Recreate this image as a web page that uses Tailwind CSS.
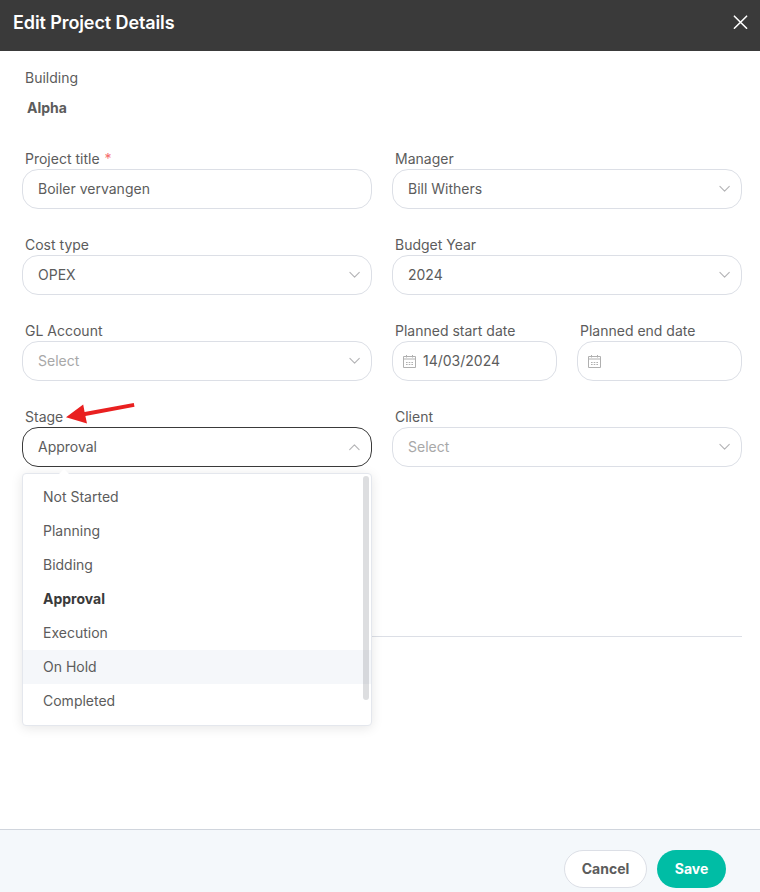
<!DOCTYPE html>
<html lang="en">
<head>
<meta charset="utf-8">
<title>Edit Project Details</title>
<script src="https://cdn.jsdelivr.net/npm/@tailwindcss/browser@4"></script>
</head>
<body class="bg-white">
<svg class="hidden">
  <symbol id="chevron" viewBox="0 0 12 8"><path d="M.9 1.4 5.6 6.2 10.3 1.4" fill="none" stroke="#b4b4b6" stroke-width="1.1" stroke-linecap="round" stroke-linejoin="round"/></symbol>
  <symbol id="calendar" viewBox="0 0 13 13"><path d="M.5 1.5h12v11H.5zM.5 4h12M3.5 0v2.5M9.5 0v2.5M3 7.5h1.6M5.7 7.5h1.6M8.4 7.5H10M3 9.5h1.6M5.7 9.5h1.6M8.4 9.5H10" fill="none" stroke="#b0b0b0" stroke-width="1"/></symbol>
</svg>
<div class="flex h-[892px] w-[760px] flex-col overflow-hidden font-['Inter',sans-serif] text-sm leading-5 text-[#5c5c5c]">
  <header class="flex h-[51px] shrink-0 items-start justify-between bg-[#3a3a3a] pl-[13px] pr-3 pt-[11px]">
    <h1 class="text-lg leading-6 font-semibold tracking-[-0.1px] text-white">Edit Project Details</h1>
    <svg class="mt-[3px] h-4 w-4" viewBox="0 0 16 16"><path d="M2.4 2.2 14.6 14.2M14.6 2.2 2.4 14.2" stroke="#fff" stroke-width="1.6" stroke-linecap="round"/></svg>
  </header>
  <main class="flex flex-1 flex-col pl-[22px] pr-[18px] pt-[17px]">
    <div class="pl-[3px]">Building</div>
    <div class="mt-[10px] pl-[5px] font-bold">Alpha</div>
    <div class="mt-[31px] grid grid-cols-2 gap-x-5 gap-y-[26px]">
      <div>
        <div class="pl-[3px]">Project title <span class="ml-[1px] text-[#f56c6c]">*</span></div>
        <div class="flex h-10 items-center rounded-[16px] border border-[#dcdfe6] pl-[15px]">Boiler vervangen</div>
      </div>
      <div>
        <div class="pl-[3px]">Manager</div>
        <div class="flex h-10 items-center justify-between rounded-[16px] border border-[#dcdfe6] pl-[15px] pr-[10px]">Bill Withers<svg class="h-2 w-3"><use href="#chevron"/></svg></div>
      </div>
      <div>
        <div class="pl-[3px]">Cost type</div>
        <div class="flex h-10 items-center justify-between rounded-[16px] border border-[#dcdfe6] pl-[15px] pr-[10px]">OPEX<svg class="h-2 w-3"><use href="#chevron"/></svg></div>
      </div>
      <div>
        <div class="pl-[3px]">Budget Year</div>
        <div class="flex h-10 items-center justify-between rounded-[16px] border border-[#dcdfe6] pl-[15px] pr-[10px]">2024<svg class="h-2 w-3"><use href="#chevron"/></svg></div>
      </div>
      <div>
        <div class="pl-[3px]">GL Account</div>
        <div class="flex h-10 items-center justify-between rounded-[16px] border border-[#dcdfe6] pl-[15px] pr-[10px] text-[#a8a8a8]">Select<svg class="h-2 w-3"><use href="#chevron"/></svg></div>
      </div>
      <div class="grid grid-cols-2 gap-x-5">
        <div>
          <div class="pl-[3px]">Planned start date</div>
          <div class="flex h-10 items-center gap-[7px] rounded-[16px] border border-[#dcdfe6] pl-[10px]"><svg class="h-[13px] w-[13px]"><use href="#calendar"/></svg>14/03/2024</div>
        </div>
        <div>
          <div class="pl-[3px]">Planned end date</div>
          <div class="flex h-10 items-center rounded-[16px] border border-[#dcdfe6] pl-[10px]"><svg class="h-[13px] w-[13px]"><use href="#calendar"/></svg></div>
        </div>
      </div>
      <div class="relative">
        <div class="pl-[3px]">Stage</div>
        <svg class="absolute left-[43px] -top-1 h-[22px] w-[70px]" viewBox="0 0 70 22"><path d="M1 14.2 18.2 1.6 19.6 9.1 68.8 0 69.5 3.8 20.4 13 22 20.4Z" fill="#e92020"/></svg>
        <div class="flex h-10 items-center justify-between rounded-[16px] border border-[#3a3a3a] pl-[15px] pr-[11px]">Approval<svg class="h-2 w-3 rotate-180"><use href="#chevron"/></svg></div>
        <div class="absolute left-0 top-[66px] z-10 h-[253px] w-[350px] rounded-[4px] border border-[#e4e7ed] bg-white pt-[6px] shadow-[0_2px_12px_rgba(0,0,0,0.1)]">
          <svg class="absolute left-[35px] -top-[6px] h-[7px] w-3" viewBox="0 0 12 7"><path d="M0 7 6 1 12 7Z" fill="#fff"/></svg>
          <div class="h-[34px] pl-5 leading-[34px]">Not Started</div>
          <div class="h-[34px] pl-5 leading-[34px]">Planning</div>
          <div class="h-[34px] pl-5 leading-[34px]">Bidding</div>
          <div class="h-[34px] pl-5 leading-[34px] font-bold text-[#3a3a3a]">Approval</div>
          <div class="h-[34px] pl-5 leading-[34px]">Execution</div>
          <div class="h-[34px] bg-[#f5f7fa] pl-5 leading-[34px]">On Hold</div>
          <div class="h-[34px] pl-5 leading-[34px]">Completed</div>
          <div class="absolute right-[2px] top-[2px] h-[224px] w-[6px] rounded-full bg-[#909399]/30"></div>
        </div>
      </div>
      <div>
        <div class="pl-[3px]">Client</div>
        <div class="flex h-10 items-center justify-between rounded-[16px] border border-[#dcdfe6] pl-[15px] pr-[10px] text-[#a8a8a8]">Select<svg class="h-2 w-3"><use href="#chevron"/></svg></div>
      </div>
    </div>
    <hr class="mt-[169px] border-[#dcdfe6]">
  </main>
  <footer class="flex h-[63px] shrink-0 items-start justify-end gap-[10px] border-t border-[#d0d5dd] bg-[#f4f8fb] pr-[34px] pt-5 font-bold">
    <button class="h-[38px] w-[83px] rounded-full border border-[#dcdfe6] bg-white">Cancel</button>
    <button class="h-[38px] w-[69px] rounded-full bg-[#00bda5] text-white">Save</button>
  </footer>
</div>
</body>
</html>
